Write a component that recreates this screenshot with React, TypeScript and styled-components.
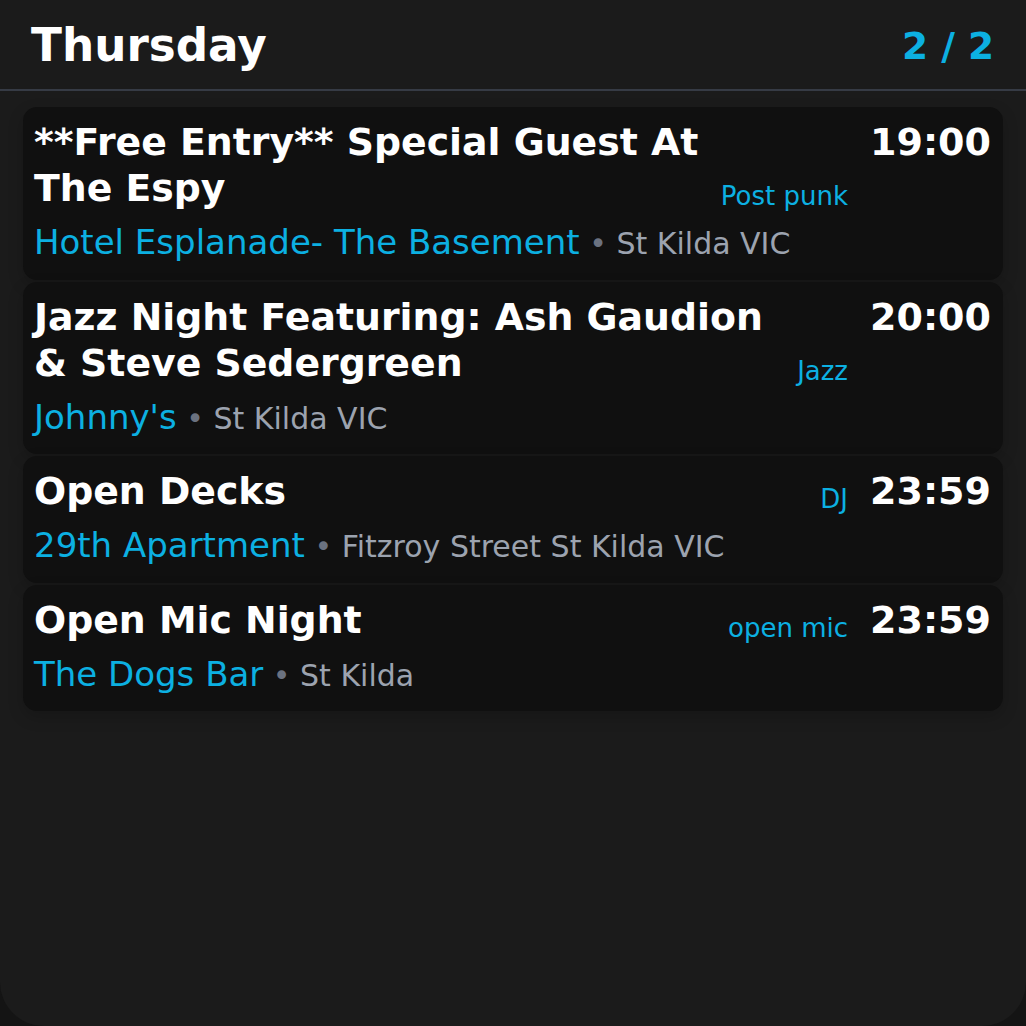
import React from "react";
import styled, { createGlobalStyle } from "styled-components";

const GlobalStyle = createGlobalStyle`
  html, body {
    margin: 0;
    padding: 0;
    background: #141414;
  }
  * { box-sizing: border-box; }
  body {
    font-family: "DejaVu Sans", "Liberation Sans", sans-serif;
  }
`;

const Screen = styled.div`
  width: 1026px;
  height: 1026px;
  background: #1b1b1b;
  border-radius: 0 0 44px 44px;
  display: flex;
  flex-direction: column;
  overflow: hidden;
`;

const Header = styled.header`
  display: flex;
  align-items: center;
  justify-content: space-between;
  padding: 19px 32px 17px 31px;
  border-bottom: 2px solid #363b45;
`;

const Day = styled.h1`
  margin: 0;
  font-size: 45.3px;
  font-weight: 700;
  color: #ffffff;
  line-height: normal;
`;

const Pager = styled.span`
  font-size: 37.5px;
  font-weight: 700;
  color: #0cb0e2;
  line-height: normal;
`;

const List = styled.div`
  display: flex;
  flex-direction: column;
  gap: 2px;
  padding: 16px 23px 0;
`;

const Card = styled.div`
  display: flex;
  align-items: flex-start;
  background: #101010;
  border-radius: 14px;
  padding: 12px 12px 11.6px 11px;
  box-shadow: 0 6px 16px rgba(0, 0, 0, 0.18);
`;

const Main = styled.div`
  flex: 1;
  min-width: 0;
  display: flex;
  flex-direction: column;
  gap: 7px;
`;

const TitleRow = styled.div`
  display: flex;
  align-items: flex-end;
  gap: 8px;
`;

const Title = styled.div`
  flex: 1;
  min-width: 0;
  font-size: 37.8px;
  line-height: 46px;
  font-weight: 700;
  color: #ffffff;
`;

const Tag = styled.span`
  font-size: 26px;
  line-height: normal;
  color: #0cb0e2;
  white-space: nowrap;
`;

const VenueLine = styled.div`
  font-size: 34px;
  line-height: 48px;
  white-space: nowrap;
`;

const Venue = styled.span`
  font-size: 34px;
  color: #0cb0e2;
`;

const Location = styled.span`
  font-size: 30px;
  color: #9ca3af;
`;

const Dot = styled.span`
  color: #6b7280;
`;

const Time = styled.div`
  margin-left: 22px;
  font-size: 38px;
  line-height: 46px;
  font-weight: 700;
  color: #ffffff;
  white-space: nowrap;
`;

type EventItem = {
  title: string;
  tag: string;
  venue: string;
  location: string;
  time: string;
};

const events: EventItem[] = [
  {
    title: "**Free Entry** Special Guest At The Espy",
    tag: "Post punk",
    venue: "Hotel Esplanade- The Basement",
    location: "St Kilda VIC",
    time: "19:00",
  },
  {
    title: "Jazz Night Featuring: Ash Gaudion & Steve Sedergreen",
    tag: "Jazz",
    venue: "Johnny's",
    location: "St Kilda VIC",
    time: "20:00",
  },
  {
    title: "Open Decks",
    tag: "DJ",
    venue: "29th Apartment",
    location: "Fitzroy Street St Kilda VIC",
    time: "23:59",
  },
  {
    title: "Open Mic Night",
    tag: "open mic",
    venue: "The Dogs Bar",
    location: "St Kilda",
    time: "23:59",
  },
];

export default function App() {
  return (
    <>
      <GlobalStyle />
      <Screen>
        <Header>
          <Day>Thursday</Day>
          <Pager>2 / 2</Pager>
        </Header>
        <List>
          {events.map((e, i) => (
            <Card key={i}>
              <Main>
                <TitleRow>
                  <Title>{e.title}</Title>
                  <Tag>{e.tag}</Tag>
                </TitleRow>
                <VenueLine>
                  <Venue>{e.venue}</Venue>
                  <Location>
                    {" "}
                    <Dot>•</Dot> {e.location}
                  </Location>
                </VenueLine>
              </Main>
              <Time>{e.time}</Time>
            </Card>
          ))}
        </List>
      </Screen>
    </>
  );
}
